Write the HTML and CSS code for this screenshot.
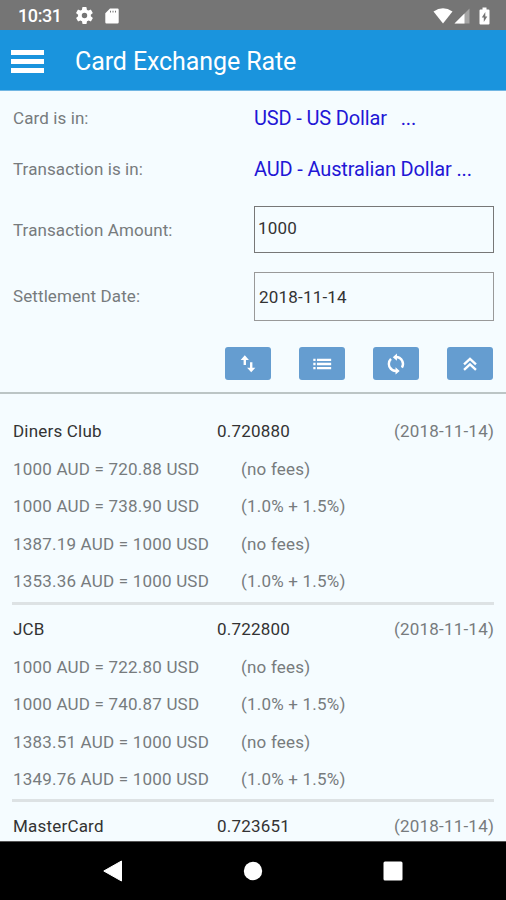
FILE: index.html
```html
<!DOCTYPE html>
<html lang="en">
<head>
 <meta charset="UTF-8">
 <meta name="viewport" content="width=device-width,initial-scale=1.0">
 <title>Card Exchange Rate</title>
 <link rel="stylesheet" href="styles.css">
</head>
<body>
<div class="statusbar">
 <span class="clock">10:31</span>
 <svg class="gear" width="17" height="17" viewBox="2 2 20 20"><path d="M19.4 13a7.500 7.500 0 0 0 0-2l2.100-1.600a.5.5 0 0 0 .1-.7l-2-3.400a.5.5 0 0 0-.6-.2l-2.500 1a7.300 7.300 0 0 0-1.700-1l-.4-2.600a.5.5 0 0 0-.5-.5h-4a.5.5 0 0 0-.5.5L9 5.100a7.300 7.300 0 0 0-1.700 1l-2.500-1a.5.5 0 0 0-.6.2l-2 3.400a.5.5 0 0 0 .1.7L4.500 11a7.500 7.500 0 0 0 0 2l-2.100 1.600a.5.5 0 0 0-.1.7l2 3.400c.1.200.4.300.6.200l2.500-1c.5.400 1.100.7 1.700 1l.4 2.600c0 .3.200.5.5.5h4c.3 0 .5-.2.5-.5l.4-2.600c.6-.2 1.200-.6 1.700-1l2.500 1c.2.100.5 0 .6-.2l2-3.400a.5.5 0 0 0-.1-.7zM12 15.200a3.200 3.200 0 1 1 0-6.400 3.200 3.200 0 0 1 0 6.400z" fill-rule="evenodd"/></svg>
 <svg class="sdcard" width="14" height="16" viewBox="0 0 14 16"><path fill-rule="evenodd" d="M5 .5h7.500q1.200 0 1.200 1.200v12.600q0 1.200-1.200 1.200h-11Q.3 15.500.3 14.300V5.200zM5 2.800v1.800h1V2.800zm2.500 0v1.800h1V2.800zm2.500 0v1.800h1V2.800z"/></svg>
 <svg class="wifi" width="20" height="16" viewBox="0 0 20 16"><path d="M.5 3.500Q10-3 19.500 3.500L10 15.500z"/></svg>
 <svg class="signal" width="16" height="16" viewBox="0 0 16 16"><path d="M15.500.5v15H.5z" opacity=".35"/><path d="M10.500 5.500v10H.5z"/></svg>
 <svg class="battery" width="11" height="18" viewBox="0 0 11 18"><path fill-rule="evenodd" d="M3.500.5h4v2h2q1 0 1 1v13q0 1-1 1h-8q-1 0-1-1v-13q0-1 1-1h2zM6.300 5L2.800 10.500h2V15l3.500-5.500h-2z"/></svg>
</div>
<div class="appbar">
 <div class="menu"><i></i><i></i><i></i></div>
 <h1>Card Exchange Rate</h1>
</div>
<div class="panel">
 <div class="field field_card">
  <label>Card is in:</label>
  <a class="currency">USD - US Dollar <span class="dots">...</span></a>
 </div>
 <div class="field field_trans">
  <label>Transaction is in:</label>
  <a class="currency">AUD - Australian Dollar ...</a>
 </div>
 <div class="field field_amount">
  <label>Transaction Amount:</label>
  <div class="input">1000</div>
 </div>
 <div class="field field_date">
  <label>Settlement Date:</label>
  <div class="input date">2018-11-14</div>
 </div>
 <div class="buttons">
  <button type="button"><svg width="24" height="24" viewBox="0 0 24 24"><path d="M8.500 13V6M15.500 10v8"/><path class="solid" d="M8.500 2.500l4.500 5H4zM15.500 21l4.500-5h-9z"/></svg></button>
  <button type="button"><svg width="24" height="24" viewBox="0 0 24 24"><path d="M2.500 7.500H5M2.500 12H5M2.500 16.500H5M6.500 7.500h15.500M6.500 12h15.500M6.500 16.500h15.500"/></svg></button>
  <button type="button"><svg width="24" height="24" viewBox="0 0 24 24"><path d="M6.500 17.500A7.700 7.700 0 0 1 6.500 6.500M12 4.300A7.700 7.700 0 0 1 18.500 16M17.500 6.500A7.700 7.700 0 0 1 18.500 8M12 19.700A7.700 7.700 0 0 1 5.500 16"/><path class="solid" d="M13 .5v8l-4.500-4zM11.500 15.500v8l4.500-4z"/></svg></button>
  <button type="button"><svg width="24" height="24" viewBox="0 0 24 24"><path d="M5.500 12.500L12 6.500l6.500 6M5.500 18.500l6.500-6 6.500 6"/></svg></button>
 </div>
</div>
<div class="results">
 <div class="card">
  <div class="head"><span>Diners Club</span><span>0.720880</span><span class="day">(2018-11-14)</span></div>
  <div class="line"><span>1000 AUD = 720.88 USD</span><span>(no fees)</span></div>
  <div class="line"><span>1000 AUD = 738.90 USD</span><span>(1.0% + 1.5%)</span></div>
  <div class="line"><span>1387.19 AUD = 1000 USD</span><span>(no fees)</span></div>
  <div class="line"><span>1353.36 AUD = 1000 USD</span><span>(1.0% + 1.5%)</span></div>
 </div>
 <div class="card">
  <div class="head"><span>JCB</span><span>0.722800</span><span class="day">(2018-11-14)</span></div>
  <div class="line"><span>1000 AUD = 722.80 USD</span><span>(no fees)</span></div>
  <div class="line"><span>1000 AUD = 740.87 USD</span><span>(1.0% + 1.5%)</span></div>
  <div class="line"><span>1383.51 AUD = 1000 USD</span><span>(no fees)</span></div>
  <div class="line"><span>1349.76 AUD = 1000 USD</span><span>(1.0% + 1.5%)</span></div>
 </div>
 <div class="card">
  <div class="head"><span>MasterCard</span><span>0.723651</span><span class="day">(2018-11-14)</span></div>
 </div>
</div>
<div class="navbar">
 <svg width="20" height="22" viewBox="0 0 20 22"><path d="M18.500 1v20L.8 11z" stroke="#fff" stroke-linejoin="round"/></svg>
 <svg width="20" height="20" viewBox="0 0 20 20"><circle cx="10" cy="10" r="9.200"/></svg>
 <svg width="20" height="20" viewBox="0 0 20 20"><rect x=".5" y=".5" width="19" height="19" rx="1.500"/></svg>
</div>
</body>
</html>
```
FILE: styles.css
```css
*{
  box-sizing: border-box;
}
body{
  margin: 0;
  height: 900px;
  display: flex;
  flex-direction: column;
  overflow: hidden;
  background: #f5fcff;
  color: #333;
  font-family: Roboto, "Liberation Sans", sans-serif;
  font-size: 17px;
  letter-spacing: 0.2px;
}
svg{
  display: block;
  fill: #fff;
}
.statusbar{
  flex: none;
  height: 30px;
  display: flex;
  align-items: center;
  padding: 1px 16px 0 18px;
  background: #757575;
  color: #fff;
}
.clock{
  width: 58px;
  font-size: 18px;
  font-weight: 500;
  letter-spacing: -0.4px;
}
.sdcard{
  margin-left: 12px;
}
.wifi{
  margin-left: auto;
}
.signal{
  margin-left: 1px;
}
.battery{
  margin-left: 9px;
}
.appbar{
  flex: none;
  height: 61px;
  display: flex;
  align-items: center;
  padding: 2px 11px 0;
  background: #1a94dd;
  border-bottom: 1px solid #71b6e3;
}
.menu{
  width: 64px;
}
.menu i{
  display: block;
  width: 33px;
  height: 5px;
  background: #fff;
}
.menu i + i{
  margin-top: 4px;
}
h1{
  margin: 0;
  padding-top: 1px;
  color: #fff;
  font-size: 25px;
  font-weight: 400;
  letter-spacing: -0.1px;
}
.panel{
  flex: none;
  height: 303px;
  padding: 0 12px 0 13px;
  border-bottom: 2px solid #bcc5c5;
}
.field{
  display: grid;
  grid-template-columns: 241px 1fr;
  align-items: center;
}
.field label{
  color: #777b7d;
  letter-spacing: 0.1px;
}
.field_card{
  height: 53px;
}
.field_trans{
  height: 50px;
}
.field_amount{
  height: 71px;
}
.field_date{
  height: 62px;
}
.currency{
  color: #2216d6;
  font-size: 20px;
  letter-spacing: -0.15px;
  white-space: nowrap;
}
.dots{
  margin-left: 9px;
}
.input{
  height: 47px;
  padding: 0 3px 4px;
  border: 1px solid #777;
  line-height: 42px;
}
.input.date{
  height: 49px;
  padding: 1px 4px 0;
  border-color: #999;
  line-height: 47px;
}
.buttons{
  display: flex;
  justify-content: flex-end;
  gap: 28px;
  margin-top: 20px;
  padding-right: 1px;
}
button{
  width: 46px;
  height: 33px;
  padding: 0;
  display: flex;
  align-items: center;
  justify-content: center;
  border: 0;
  border-radius: 3px;
  background: #659dd0;
}
button svg{
  width: 22px;
  height: 22px;
  fill: none;
  stroke: #fff;
  stroke-width: 2.6;
}
button .solid{
  fill: #fff;
  stroke: none;
}
.results{
  flex: 1;
  overflow: hidden;
  padding: 13px 12px 0;
}
.card{
  height: 197px;
  padding: 5.5px 0 0 1px;
}
.card + .card{
  border-top: 3px solid #dde2e4;
  padding-top: 5.5px;
}
.card:first-child{
  height: 195px;
}
.head, .line{
  display: grid;
  height: 37.5px;
  align-items: center;
  white-space: nowrap;
}
.head{
  grid-template-columns: 204px 100px 1fr;
}
.line{
  grid-template-columns: 228px 1fr;
  color: #777b7d;
}
.day{
  color: #777b7d;
  text-align: right;
}
.navbar{
  flex: none;
  height: 59px;
  display: flex;
  justify-content: space-between;
  align-items: center;
  padding: 0 103px;
  background: #000;
  border-top: 1px solid #555;
}
```
